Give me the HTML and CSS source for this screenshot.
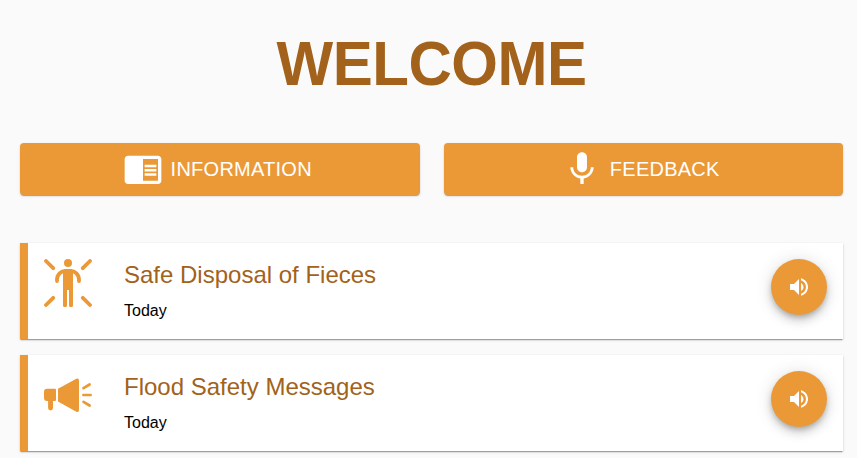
FILE: index.html
```html
<!DOCTYPE html>
<html lang="en">
<head>
<meta charset="utf-8">
<title>Welcome</title>
<link rel="stylesheet" href="styles.css">
</head>
<body>
<main class="page">
  <h1 class="title">WELCOME</h1>
  <nav class="actions">
    <a class="action">
      <svg class="action-icon" viewBox="0 0 24 24"><path d="M13 12h7v1.5h-7zm0-2.5h7V11h-7zm0 5h7V16h-7zM21 4H3c-1.1 0-2 .9-2 2v13c0 1.1.9 2 2 2h18c1.1 0 2-.9 2-2V6c0-1.1-.9-2-2-2zm0 15h-9V6h9v13z"/></svg>
      <span>INFORMATION</span>
    </a>
    <a class="action">
      <svg class="action-icon" viewBox="0 0 24 24"><path d="M12 14c1.66 0 2.99-1.34 2.99-3L15 5c0-1.66-1.34-3-3-3S9 3.34 9 5v6c0 1.66 1.34 3 3 3zm5.3-3c0 3-2.54 5.1-5.3 5.1S6.7 14 6.7 11H5c0 3.41 2.72 6.23 6 6.72V21h2v-3.28c3.28-.48 6-3.3 6-6.72h-1.7z"/></svg>
      <span>FEEDBACK</span>
    </a>
  </nav>
  <section class="messages">
    <article class="card">
      <svg class="card-icon" viewBox="0 0 48 48">
        <circle cx="24" cy="4" r="4"/>
        <path d="M19 14h10v32.2a1.9 1.9 0 0 1-4 0V31h-2v15.200a1.900 1.900 0 0 1-4 0z"/>
        <path d="M20 10h8a9 11 0 0 1 1 4v4H19v-4z"/>
        <path class="stroke" d="M13 22v-1.200C13 15.500 17 11.800 21.500 11.800h5C31 11.800 35 15.500 35 20.800V22"/>
        <path class="stroke" d="M2 2l7.200 7.200M46 2l-7.200 7.200M2 46l7.200-7.200M46 46l-7.200-7.200"/>
      </svg>
      <div class="card-text">
        <h2 class="card-title">Safe Disposal of Fieces</h2>
        <p class="card-date">Today</p>
      </div>
      <button class="fab" aria-label="Play">
        <svg class="fab-icon" viewBox="0 0 24 24"><path d="M3 9v6h4l5 5V4L7 9H3zm13.500 3c0-1.770-1.020-3.290-2.500-4.030v8.050c1.480-.73 2.500-2.250 2.500-4.020zM14 3.230v2.060c2.890.86 5 3.540 5 6.710s-2.110 5.850-5 6.710v2.060c4.010-.91 7-4.490 7-8.770s-2.990-7.860-7-8.770z"/></svg>
      </button>
    </article>
    <article class="card">
      <svg class="card-icon" viewBox="0 0 48 48">
        <path d="M3 17.700h8a1 1 0 0 1 1 1V29a1 1 0 0 1-1 1H9v7a2.400 2.400 0 0 1-4.900 0v-7H3a3 3 0 0 1-3-3v-6.300a3 3 0 0 1 3-3z"/>
        <path d="M14 17.800L32.300 7.700Q35 6.800 35 9.500v29.500q0 2.700-2.700 1.800L14 30.500z"/>
        <path class="stroke thin" d="M39.500 17.200l6.100-3.700M39.400 24h7.200M39.500 30.800l6.100 3.700"/>
      </svg>
      <div class="card-text">
        <h2 class="card-title">Flood Safety Messages</h2>
        <p class="card-date">Today</p>
      </div>
      <button class="fab" aria-label="Play">
        <svg class="fab-icon" viewBox="0 0 24 24"><path d="M3 9v6h4l5 5V4L7 9H3zm13.500 3c0-1.770-1.020-3.290-2.500-4.030v8.050c1.480-.73 2.500-2.250 2.500-4.020zM14 3.230v2.060c2.890.86 5 3.540 5 6.710s-2.110 5.850-5 6.710v2.060c4.010-.91 7-4.490 7-8.770s-2.990-7.860-7-8.770z"/></svg>
      </button>
    </article>
  </section>
</main>
</body>
</html>
```
FILE: styles.css
```css
* {
  box-sizing: border-box;
}

body {
  margin: 0;
  background: #fafafa;
  color: #000;
  font-family: "Liberation Sans", Arial, sans-serif;
}

.page {
  padding: 28px 14px 7px 20px;
}

.title {
  margin: 0 0 43px;
  color: #a2621b;
  font-size: 60px;
  font-weight: 700;
  line-height: 72px;
  letter-spacing: -0.5px;
  text-align: center;
  transform: scaleY(1.035);
}

.actions {
  display: grid;
  grid-template-columns: 1fr 1fr;
  gap: 24px;
  margin-bottom: 48px;
}

.action,
.card {
  box-shadow: 0 2px 1px -1px rgba(0, 0, 0, 0.2), 0 1px 1px rgba(0, 0, 0, 0.14), 0 1px 3px rgba(0, 0, 0, 0.12);
}

.action {
  display: flex;
  align-items: center;
  justify-content: center;
  gap: 8px;
  height: 52px;
  padding-right: 5px;
  border-radius: 4px;
  background: #eb9937;
  color: #fff;
  font-size: 20px;
  letter-spacing: 0.25px;
}

.action-icon {
  width: 40px;
  height: 40px;
  fill: currentColor;
}

.messages {
  display: flex;
  flex-direction: column;
  gap: 16px;
}

.card {
  display: flex;
  align-items: flex-start;
  height: 96px;
  padding: 16px;
  border-left: 8px solid #eb9937;
  background: #fff;
}

.card-icon {
  flex: none;
  width: 48px;
  height: 48px;
  margin-right: 32px;
  fill: #eb9937;
}

.stroke {
  fill: none;
  stroke: #eb9937;
  stroke-width: 3.8;
  stroke-linecap: round;
}

.thin {
  stroke-width: 2.7;
}

.card-text {
  flex: 1;
}

.card-title {
  margin: 0;
  color: #a2621b;
  font-size: 24px;
  font-weight: 400;
  line-height: 32px;
}

.card-date {
  margin: 8px 0 0;
  font-size: 16px;
  line-height: 24px;
}

.fab {
  display: flex;
  align-items: center;
  justify-content: center;
  width: 56px;
  height: 56px;
  padding: 0;
  border: 0;
  border-radius: 50%;
  background: #eb9937;
  color: #fff;
  box-shadow: 0 3px 5px -1px rgba(0, 0, 0, 0.2), 0 6px 10px rgba(0, 0, 0, 0.14), 0 1px 18px rgba(0, 0, 0, 0.12);
}

.fab-icon {
  width: 24px;
  height: 24px;
  fill: currentColor;
}
```
